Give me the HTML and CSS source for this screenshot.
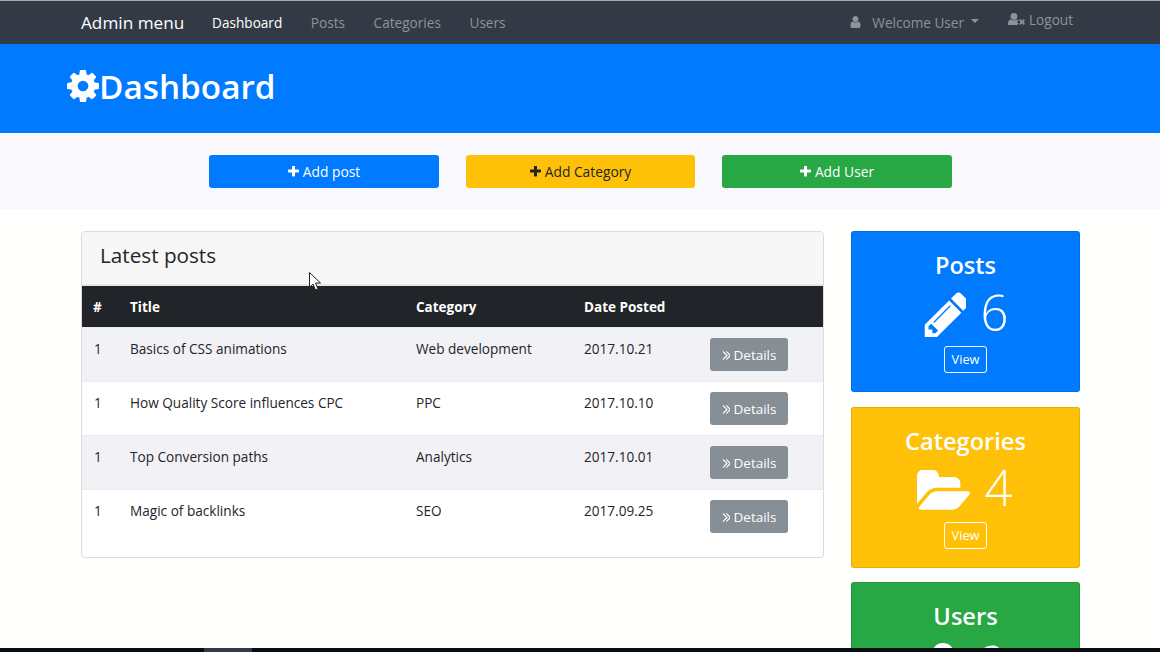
FILE: index.html
```html
<!DOCTYPE html>
<html lang="en">
<head>
<meta charset="utf-8">
<title>Admin menu</title>
<link rel="stylesheet" href="styles.css">
</head>
<body>
<svg class="defs" aria-hidden="true">
  <symbol id="i-cog" viewBox="128 128 1536 1536"><path d="M1152 896q0-106-75-181t-181-75-181 75-75 181 75 181 181 75 181-75 75-181zm512-109v222q0 12-8 23t-20 13l-185 28q-19 54-39 91 35 50 107 138 10 12 10 25t-9 23q-27 37-99 108t-94 71q-12 0-26-9l-138-108q-44 23-91 38-16 136-29 186-7 28-36 28h-222q-14 0-24.500-8.500t-11.500-21.500l-28-184q-49-16-90-37l-141 107q-10 9-25 9-14 0-25-11-126-114-165-168-7-10-7-23 0-12 8-23 15-21 51-66.500t54-70.500q-27-50-41-99l-183-27q-13-2-21-12.500t-8-23.500v-222q0-12 8-23t19-13l186-28q14-46 39-92-40-57-107-138-10-12-10-24 0-10 9-23 26-36 98.500-107.500t94.500-71.500q13 0 26 10l138 107q44-23 91-38 16-136 29-186 7-28 36-28h222q14 0 24.500 8.500t11.500 21.500l28 184q49 16 90 37l142-107q9-9 24-9 13 0 25 10 129 119 165 170 7 8 7 22 0 12-8 23-15 21-51 66.500t-54 70.500q26 50 41 98l183 28q13 2 21 12.500t8 23.500z"/></symbol>
  <symbol id="i-pencil" viewBox="0 0 1536 1536"><path transform="translate(0 -128)" d="M491 1536l91-91-235-235-91 91v107h128v128h107zm523-928q0-22-22-22-10 0-17 7l-542 542q-7 7-7 17 0 22 22 22 10 0 17-7l542-542q7-7 7-17zm-54-192l416 416-832 832h-416v-416zm683 96q0 53-37 90l-166 166-416-416 166-165q36-38 90-38 53 0 91 38l235 234q37 39 37 91z"/></symbol>
  <symbol id="i-folder" viewBox="-33 132 1878 1391"><path d="M1845 931q0 35-35 74l-336 396q-43 51-120.500 86.500t-143.500 35.500h-1088q-34 0-60.500-13t-26.500-43q0-35 35-74l336-396q43-51 120.500-86.500t143.500-35.500h1088q34 0 60.500 13t26.500 43zm-343-344v160h-832q-94 0-197 47.500t-164 119.500l-337 396-5 6q0-4-.5-12.500t-.5-12.500v-960q0-92 66-158t158-66h320q92 0 158 66t66 158v32h544q92 0 158 66t66 158z"/></symbol>
  <symbol id="i-plus" viewBox="192 192 1408 1408"><path d="M1600 736v192q0 40-28 68t-68 28h-416v416q0 40-28 68t-68 28h-192q-40 0-68-28t-28-68v-416h-416q-40 0-68-28t-28-68v-192q0-40 28-68t68-28h416v-416q0-40 28-68t68-28h192q40 0 68 28t28 68v416h416q40 0 68 28t28 68z"/></symbol>
  <symbol id="i-user" viewBox="192 128 1408 1536"><path d="M1536 1399q0 109-62.500 187t-150.500 78h-854q-88 0-150.500-78t-62.500-187q0-85 8.500-160.500t31.500-152 58.500-131 94-89 134.500-34.500q131 128 313 128t313-128q76 0 134.500 34.500t94 89 58.500 131 31.500 152 8.500 160.500zm-256-887q0 159-112.500 271.500t-271.500 112.500-271.500-112.500-112.500-271.500 112.500-271.500 271.500-112.500 271.500 112.500 112.500 271.500z"/></symbol>
  <symbol id="i-user-x" viewBox="0 0 20 14"><circle cx="7" cy="4" r="4"/><path d="M1 14q-1 0-1-1 0-5 3-5.500 4 2 8 0 1 .2 1.500 1L10.500 10.500l1.800 1.800L11 14z"/><path d="M13 8.500l1.500-1.500 2 2 2-2L20 8.500l-2 2 2 2-1.500 1.500-2-2-2 2-1.500-1.500 2-2z"/></symbol>
  <symbol id="i-angles" viewBox="576 448 832 1024"><path d="M979 960q0 13-10 23l-466 466q-10 10-23 10t-23-10l-50-50q-10-10-10-23t10-23l393-393-393-393q-10-10-10-23t10-23l50-50q10-10 23-10t23 10l466 466q10 10 10 23zm384 0q0 13-10 23l-466 466q-10 10-23 10t-23-10l-50-50q-10-10-10-23t10-23l393-393-393-393q-10-10-10-23t10-23l50-50q10-10 23-10t23 10l466 466q10 10 10 23z" transform="translate(205 0)"/></symbol>
</svg>

<nav class="navbar">
  <a class="brand" href="#">Admin menu</a>
  <ul class="nav-links">
    <li><a class="nav-link active" href="#">Dashboard</a></li>
    <li><a class="nav-link" href="#">Posts</a></li>
    <li><a class="nav-link" href="#">Categories</a></li>
    <li><a class="nav-link" href="#">Users</a></li>
  </ul>
  <div class="nav-right">
    <a class="nav-link welcome" href="#"><svg class="ic-user"><use href="#i-user"/></svg>Welcome User<span class="caret"></span></a>
    <a class="nav-link logout" href="#"><svg class="ic-userx"><use href="#i-user-x"/></svg>Logout</a>
  </div>
</nav>

<header class="hero">
  <h1 class="hero-title"><svg class="ic-cog"><use href="#i-cog"/></svg>Dashboard</h1>
</header>

<section class="actions">
  <a class="btn btn-blue" href="#"><svg class="ic-plus"><use href="#i-plus"/></svg>Add post</a>
  <a class="btn btn-yellow" href="#"><svg class="ic-plus"><use href="#i-plus"/></svg>Add Category</a>
  <a class="btn btn-green" href="#"><svg class="ic-plus"><use href="#i-plus"/></svg>Add User</a>
</section>

<main class="content">
  <section class="card">
    <h2 class="card-title">Latest posts</h2>
    <table class="posts">
      <colgroup><col class="c1"><col class="c2"><col class="c3"><col class="c4"><col class="c5"></colgroup>
      <thead>
        <tr><th>#</th><th>Title</th><th>Category</th><th>Date Posted</th><th></th></tr>
      </thead>
      <tbody>
        <tr><td>1</td><td>Basics of CSS animations</td><td>Web development</td><td>2017.10.21</td><td class="cell-btn"><a class="details" href="#"><svg class="ic-angles"><use href="#i-angles"/></svg>Details</a></td></tr>
        <tr><td>1</td><td>How Quality Score influences CPC</td><td>PPC</td><td>2017.10.10</td><td class="cell-btn"><a class="details" href="#"><svg class="ic-angles"><use href="#i-angles"/></svg>Details</a></td></tr>
        <tr><td>1</td><td>Top Conversion paths</td><td>Analytics</td><td>2017.10.01</td><td class="cell-btn"><a class="details" href="#"><svg class="ic-angles"><use href="#i-angles"/></svg>Details</a></td></tr>
        <tr><td>1</td><td>Magic of backlinks</td><td>SEO</td><td>2017.09.25</td><td class="cell-btn"><a class="details" href="#"><svg class="ic-angles"><use href="#i-angles"/></svg>Details</a></td></tr>
      </tbody>
    </table>
  </section>

  <aside class="stats">
    <div class="stat stat-blue">
      <h3 class="stat-title">Posts</h3>
      <div class="stat-value"><svg class="ic-pencil"><use href="#i-pencil"/></svg><span>6</span></div>
      <a class="view" href="#">View</a>
    </div>
    <div class="stat stat-yellow">
      <h3 class="stat-title">Categories</h3>
      <div class="stat-value"><svg class="ic-folder"><use href="#i-folder"/></svg><span>4</span></div>
      <a class="view" href="#">View</a>
    </div>
    <div class="stat stat-green">
      <h3 class="stat-title">Users</h3>
      <div class="stat-value"><svg class="ic-bigusers"><use href="#i-user"/></svg><span>2</span></div>
      <a class="view" href="#">View</a>
    </div>
  </aside>
</main>

<svg class="cursor" viewBox="0 0 12 19" aria-hidden="true"><path d="M.5.5v15l3.500-3.500 2.500 6 2.500-1-2.500-6h5z" fill="#fff" stroke="#222" stroke-width="1"/></svg>
<div class="taskbar"><span class="task"></span></div>
</body>
</html>
```

FILE: styles.css
```css
* { box-sizing: border-box; }
html, body { margin: 0; height: 652px; overflow: hidden; }
body {
  position: relative;
  background: #fffffd;
  color: #212529;
  font-family: "Open Sans", "Liberation Sans", sans-serif;
  font-size: 13.6px;
  line-height: 21px;
}
a { text-decoration: none; color: inherit; }
svg { fill: currentColor; }
.defs { display: none; }

.navbar {
  display: flex;
  align-items: center;
  height: 44px;
  padding: 0 87px 0 81px;
  background: #343a45;
  border-top: 1px solid #a9a9a9;
}
.brand { color: #fff; font-size: 17.2px; margin-right: 13.5px; }
.nav-links { display: flex; list-style: none; margin: 0; padding: 0; }
.nav-link { display: flex; align-items: center; color: #8f9296; padding: 0 14.3px; font-size: 13.6px; }
.nav-link.active { color: #fff; }
.nav-right { display: flex; align-items: center; margin-left: auto; }
.welcome { padding: 0 29px 0 0; margin-top: -1px; }
.logout { padding: 0; margin-top: -7px; }
.ic-user { width: 11px; height: 12px; margin-right: 11px; }
.ic-userx { width: 17px; height: 12px; margin-right: 4px; }
.caret {
  width: 0; height: 0; margin-left: 7px; margin-top: -2px;
  border-left: 4.500px solid transparent;
  border-right: 4.500px solid transparent;
  border-top: 4.500px solid currentColor;
}

.hero { height: 89px; background: #007bff; color: #fff; padding: 19px 0 0 67px; }
.hero-title { display: flex; align-items: center; margin: 0; font-size: 33.3px; line-height: 46px; font-weight: 600; }
.ic-cog { width: 32px; height: 32px; }

.actions {
  display: flex;
  justify-content: center;
  gap: 27px;
  height: 76px;
  padding: 22px 0 0 1px;
  background: #f9f9fd;
}
.btn {
  display: flex;
  align-items: center;
  justify-content: center;
  width: 229.5px;
  height: 33px;
  border-radius: 3px;
  font-size: 13.8px;
}
.btn-blue { background: #007bff; color: #fff; }
.btn-yellow { background: #ffc107; color: #212529; }
.btn-green { background: #28a745; color: #fff; }
.ic-plus { width: 11px; height: 11px; margin-right: 4px; }

.content { display: flex; align-items: flex-start; gap: 27px; padding: 22px 0 0 81px; }

.card {
  width: 743px;
  height: 327px;
  background: #fff;
  border: 1px solid #dcdcdc;
  border-radius: 4px;
  overflow: hidden;
}
.card-title {
  margin: 0;
  height: 54px;
  padding: 8px 18px 0;
  font-size: 20.7px;
  line-height: 30px;
  font-weight: 500;
  background: #f7f7f7;
  border-bottom: 2px solid #e6e6e6;
}
.posts { width: 100%; table-layout: fixed; border-collapse: collapse; }
.c1 { width: 36px; } .c2 { width: 286px; } .c3 { width: 168px; } .c4 { width: 126px; }
.posts th {
  height: 41px;
  padding: 2px 12px 0 11px;
  text-align: left;
  font-weight: 700;
  font-size: 13.5px;
  color: #fff;
  background: #212529;
}
.posts th + th { padding-left: 12px; }
.posts td {
  height: 54px;
  padding: 10px 12px 0;
  vertical-align: top;
  border-top: 1px solid #e9ecef;
}
.posts tbody tr:nth-child(odd) td { background: #f2f2f6; }
.posts .cell-btn { padding-top: 10px; }
.details {
  display: flex;
  align-items: center;
  justify-content: center;
  width: 78px;
  height: 33px;
  padding-top: 2px;
  background: #868e96;
  color: #fff;
  border-radius: 3px;
  font-size: 13.5px;
}
.ic-angles { width: 8px; height: 9px; margin-right: 4px; }

.stats { display: flex; flex-direction: column; gap: 14.5px; width: 229px; }
.stat {
  height: 161px;
  padding: 16px 0 0;
  border-radius: 3px;
  color: #fff;
  text-align: center;
  border: 1px solid rgba(0, 0, 0, .1);
}
.stat-blue { background: #007bff; }
.stat-yellow { background: #ffc107; }
.stat-green { background: #28a745; }
.stat-title { margin: 0; font-size: 23.6px; line-height: 34px; font-weight: 600; }
.stat-value {
  display: flex;
  align-items: center;
  justify-content: center;
  gap: 15px;
  height: 50px;
  margin-top: 5px;
  padding-right: 2px;
  font-size: 49px;
  font-weight: 300;
}
.stat-value svg { margin-top: 4px; }
.ic-pencil { width: 45px; height: 45px; }
.ic-folder { width: 53px; height: 40px; }
.ic-bigusers { width: 42px; height: 45px; }
.view {
  display: inline-block;
  margin-top: 9px;
  padding: 0 6.5px;
  height: 27px;
  line-height: 25px;
  font-size: 12.8px;
  border: 1px solid #fff;
  border-radius: 3px;
}

.cursor { position: absolute; left: 309px; top: 272px; width: 12px; height: 19px; }
.taskbar { position: absolute; left: 0; right: 0; bottom: 0; height: 4px; background: #060d14; }
.task { position: absolute; left: 204px; top: 0; width: 48px; height: 4px; background: #343a45; }
```
